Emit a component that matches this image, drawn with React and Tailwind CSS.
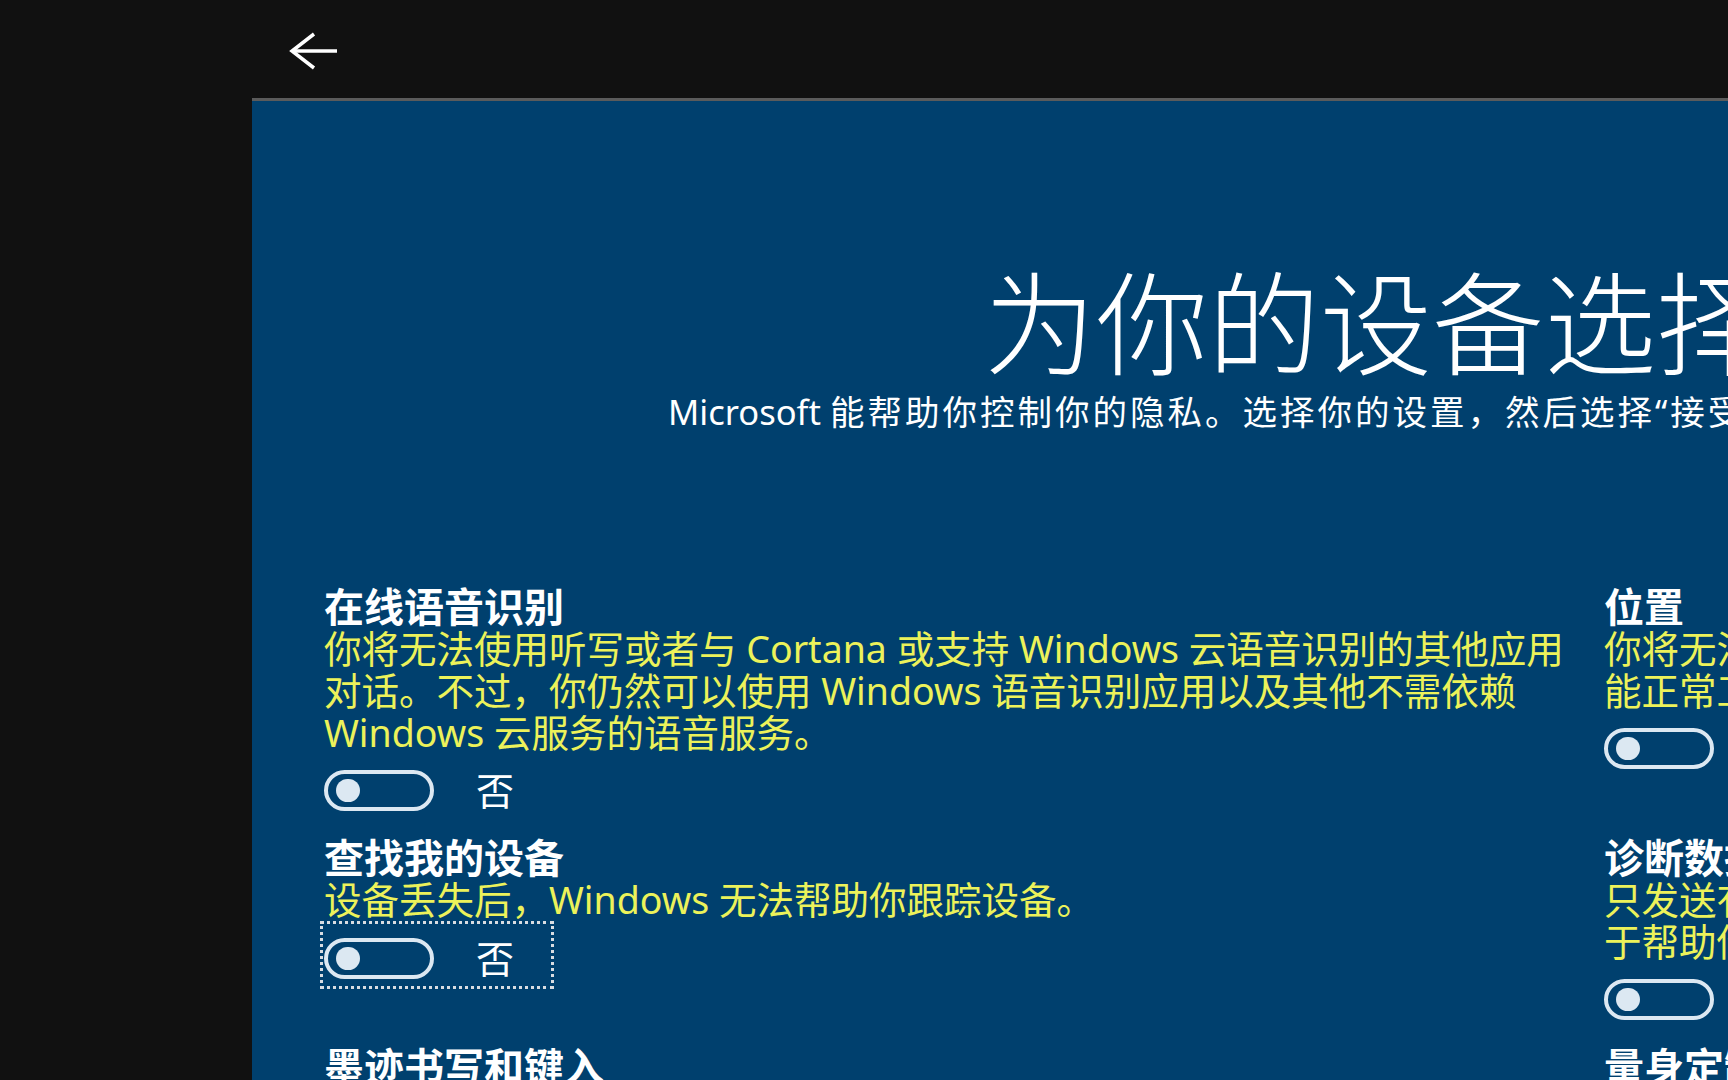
import React from "react";

const Toggle = () => (
    <div className="w-[110px] h-[41px] rounded-full border-[4px] border-[#dce8f2] flex items-center">
        <div className="ml-[8px] w-[24px] h-[23px] rounded-full bg-[#dce8f2]" />
    </div>
);

const ToggleRow = () => (
    <div className="flex items-center">
        <Toggle />
        <span className="ml-[42px] text-[38px] leading-[42px] text-white">否</span>
    </div>
);

const Setting = ({ title, lines, focused }) => (
    <div className="flex flex-col">
        <div className="text-[40px] leading-[42px] font-bold text-white whitespace-nowrap">{title}</div>
        {lines && (
            <div className="text-[37.5px] leading-[42px] text-[#ecf25a] whitespace-nowrap">
                {lines.map((l, i) => (
                    <div key={i}>{l}</div>
                ))}
            </div>
        )}
        {lines &&
            (focused ? (
                <div className="w-fit -ml-[4px] border-[3px] border-dotted border-[#d9dde2] pl-[1px] pr-[37px] pt-[13px] pb-[7px]">
                    <ToggleRow />
                </div>
            ) : (
                <div className="mt-[15px]">
                    <ToggleRow />
                </div>
            ))}
    </div>
);

const App = () => {
    return (
        <div className="w-[1728px] h-[1080px] overflow-hidden bg-[#111111] flex flex-col font-['Noto_Sans','Noto_Sans_CJK_SC',sans-serif]">
            <div className="h-[98px] shrink-0 pl-[289px] pt-[32px]">
                <svg width="50" height="38" viewBox="0 0 50 38" fill="none" stroke="white" strokeWidth="3.5">
                    <path d="M25 2 L3 19 L25 36" />
                    <path d="M3 19 H48" />
                </svg>
            </div>

            <div className="flex-1 ml-[252px] border-t-[3px] border-[#5b5b5b] bg-[#00406e] overflow-hidden">
                <div className="mt-[166px] pl-[732px] text-[112px] leading-[114px] font-light text-white whitespace-nowrap">
                    为你的设备选择隐私设置
                </div>
                <div className="mt-[13px] pl-[416px] text-[34.5px] leading-[36px] text-white whitespace-nowrap">
                    Microsoft{" "}
                    <span className="tracking-[3px]">能帮助你控制你的隐私。选择你的设置，然后选择“接受”以保存。</span>
                </div>

                <div className="mt-[156px] pl-[72px] grid grid-cols-[1250px_1250px] gap-x-[30px] gap-y-[26px]">
                    <Setting
                        title="在线语音识别"
                        lines={[
                            "你将无法使用听写或者与 Cortana 或支持 Windows 云语音识别的其他应用",
                            "对话。不过，你仍然可以使用 Windows 语音识别应用以及其他不需依赖",
                            "Windows 云服务的语音服务。",
                        ]}
                    />
                    <Setting
                        title="位置"
                        lines={[
                            "你将无法获得基于位置的体验（例如路线和天气），以及其他需要你的位置才",
                            "能正常工作的服务。",
                        ]}
                    />
                    <Setting
                        title="查找我的设备"
                        lines={["设备丢失后，Windows 无法帮助你跟踪设备。"]}
                        focused
                    />
                    <Setting
                        title="诊断数据"
                        lines={[
                            "只发送有关你的设备、其设置和功能以及设备是否正常运行的信息。诊断数据用",
                            "于帮助你的设备保持安全和最新状态，排查问题并改进产品。",
                        ]}
                    />
                    <Setting title="墨迹书写和键入" />
                    <Setting title="量身定制的体验" />
                </div>
            </div>
        </div>
    );
};

export default App;
